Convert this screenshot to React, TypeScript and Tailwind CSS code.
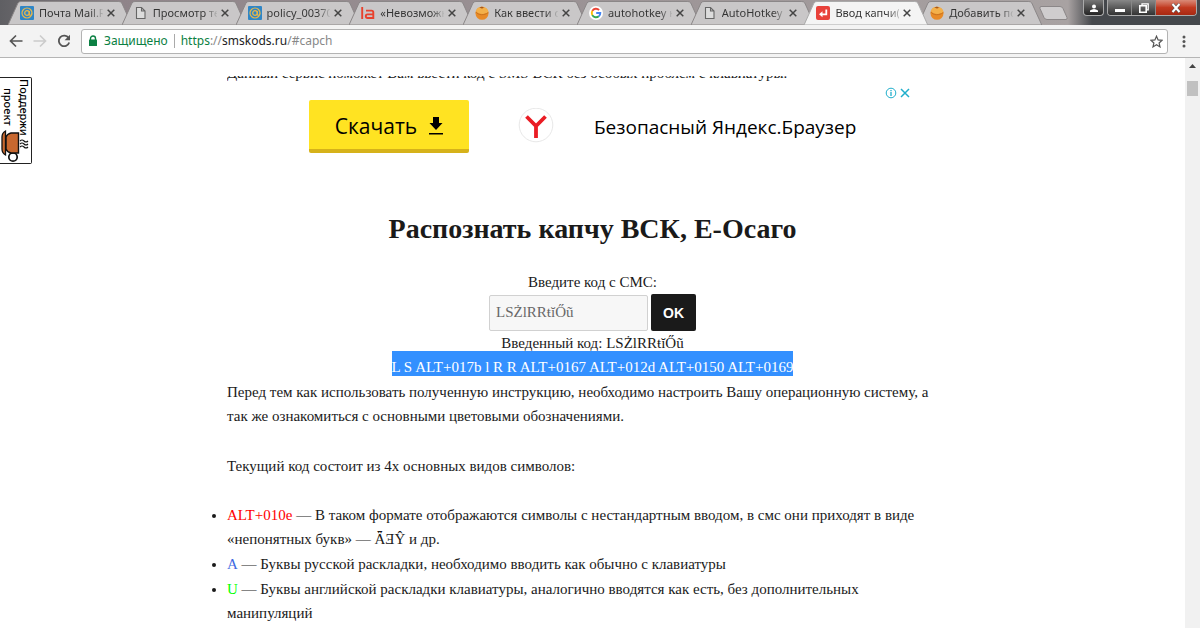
import { useState } from "react";
import type { ReactNode } from "react";
import clsx from "clsx";

type Tab = { title: string; icon: ReactNode; active?: boolean };

function MailIcon() {
  return (
    <svg viewBox="0 0 14 14" className="h-3.5 w-3.5">
      <rect width="14" height="14" rx="1" fill="#2f86c6" />
      <circle cx="7" cy="7" r="5" fill="none" stroke="#e8b64a" strokeWidth="1.2" />
      <circle cx="7" cy="7" r="2.3" fill="none" stroke="#e8b64a" strokeWidth="1.3" />
      <path d="M9.3 5v3.2c0 1.5 2.4 1.4 2.7-.8" fill="none" stroke="#e8b64a" strokeWidth="1.1" />
    </svg>
  );
}

function PageIcon() {
  return (
    <svg viewBox="0 0 14 14" className="h-3.5 w-3.5">
      <path d="M2.5 1.5h5L11 5v7.500H2.500zM7.500 1.500V5H11" fill="#dcdcdc" stroke="#666" strokeWidth="1.1" />
    </svg>
  );
}

function LaIcon() {
  return (
    <svg viewBox="0 0 14 14" className="h-3.5 w-3.5">
      <path
        d="M1.2 1v12M5 4.6h5.5q1.800 0 1.800 1.800V12H6.500q-1.700 0-1.700-1.700 0-1.900 1.700-1.900h5.800"
        fill="none"
        stroke="#e8412c"
        strokeWidth="1.9"
      />
    </svg>
  );
}

function BallIcon() {
  return (
    <svg viewBox="0 0 14 14" className="h-3.5 w-3.5">
      <circle cx="7" cy="7.3" r="6.5" fill="#e88a26" />
      <path d="M.8 5C2 1.500 5 .8 7 .8c3.500 0 6 2.400 6.300 5C10 9 3.500 8.500.8 5z" fill="#f3b04a" />
      <path d="M.8 6c2.500 3.500 8.500 3.500 12.500.6" fill="none" stroke="#c9731f" />
      <path d="M4.500 1.600Q6.500 0 9 1.500 7 3.300 4.500 1.600z" fill="#a8561a" />
    </svg>
  );
}

function GoogleIcon() {
  return (
    <svg viewBox="0 0 14 14" className="h-3.5 w-3.5">
      <circle cx="7" cy="7" r="7" fill="#fff" />
      <g fill="none" strokeWidth="1.9">
        <path d="M10.1 4A4.3 4.3 0 0 0 3.300 4.900" stroke="#ea4335" />
        <path d="M3.3 4.900a4.300 4.300 0 0 0 0 4.200" stroke="#fbbc05" />
        <path d="M3.3 9.100a4.300 4.300 0 0 0 6.500 1.200" stroke="#34a853" />
        <path d="M9.8 10.300A4.300 4.300 0 0 0 11.300 7H7.200" stroke="#4285f4" />
      </g>
    </svg>
  );
}

function EnterIcon() {
  return (
    <svg viewBox="0 0 14 14" className="h-3.5 w-3.5">
      <rect width="14" height="14" rx="2" fill="#e8413a" />
      <path d="M10.3 3.500v4.800H5" fill="none" stroke="#fff" strokeWidth="1.8" />
      <path d="M6.5 5.300v6L3 8.300z" fill="#fff" />
    </svg>
  );
}

const tabs: Tab[] = [
  { title: "Почта Mail.R", icon: <MailIcon /> },
  { title: "Просмотр те", icon: <PageIcon /> },
  { title: "policy_00370", icon: <MailIcon /> },
  { title: "«Невозможн", icon: <LaIcon /> },
  { title: "Как ввести с", icon: <BallIcon /> },
  { title: "autohotkey н", icon: <GoogleIcon /> },
  { title: "AutoHotkey", icon: <PageIcon /> },
  { title: "Ввод капчи(", icon: <EnterIcon />, active: true },
  { title: "Добавить по", icon: <BallIcon /> },
];

function TabItem({ tab }: { tab: Tab }) {
  return (
    <div className={clsx("relative flex h-6 min-w-0 flex-1 items-center pl-3", tab.active && "z-10")}>
      <svg viewBox="0 0 124 24" preserveAspectRatio="none" className="absolute inset-y-0 left-0 -z-10 h-6 w-[calc(100%+10px)]">
        <path
          d="M0 24L10 2Q11 .5 13 .5H111Q113 .5 114 2L124 24z"
          fill={tab.active ? "#f4f4f4" : "#c9c7c8"}
          stroke={tab.active ? "#aaa" : "#8b8788"}
        />
      </svg>
      <span className="shrink-0">{tab.icon}</span>
      <button className="ml-[5px] min-w-0 flex-1 bg-linear-to-r from-[#333] from-80% to-[#bbb] bg-clip-text text-left text-[11px] whitespace-nowrap text-transparent">
        {tab.title}
      </button>
      <button aria-label="Закрыть вкладку" className="mr-[3px] shrink-0 py-1 pl-1">
        <svg viewBox="0 0 8 8" className="mr-1 h-2 w-2">
          <path d="M.7.7l6.600 6.600M7.300.7L.7 7.300" stroke="#444" strokeWidth="1.5" />
        </svg>
      </button>
    </div>
  );
}

function WindowControls() {
  return (
    <div className="flex h-4 gap-[3px] pr-[3px]">
      <button aria-label="Профиль" className="flex w-[21px] items-center justify-center rounded-b border border-t-0 border-[#aaa] bg-linear-to-b from-[#777] to-[#252525]">
        <svg viewBox="0 0 10 10" className="h-2.5 w-2.5" fill="#fff">
          <circle cx="5" cy="3.5" r="2" />
          <path d="M1 9V7.500Q3 6 5 6t4 1.500V9z" />
        </svg>
      </button>
      <div className="flex overflow-hidden rounded-b border border-t-0 border-[#aaa]">
        <button aria-label="Свернуть" className="flex w-6 items-center justify-center border-r border-[#888] bg-linear-to-b from-[#888] to-[#333]">
          <svg viewBox="0 0 10 10" className="h-2.5 w-2.5">
            <path d="M0 6h10v3H0z" fill="#fff" />
          </svg>
        </button>
        <button aria-label="Развернуть" className="flex w-6 items-center justify-center border-r border-[#888] bg-linear-to-b from-[#888] to-[#333]">
          <svg viewBox="0 0 10 10" className="h-2.5 w-2.5" fill="none" stroke="#fff" strokeWidth="1.3">
            <path d="M3 2.500V.8h6.200v6H7.500" />
            <path d="M.8 2.800h6.400v6.400H.8z" strokeWidth="1.6" />
          </svg>
        </button>
        <button aria-label="Закрыть" className="flex w-10 items-center justify-center bg-linear-to-b from-[#d98a78] via-[#c23a20] to-[#a82912]">
          <svg viewBox="0 0 10 10" className="h-2.5 w-2.5">
            <path d="M1.5 1l7 8M8.500 1l-7 8" stroke="#555" strokeWidth="3.2" />
            <path d="M1.5 1l7 8M8.500 1l-7 8" stroke="#fff" strokeWidth="2" />
          </svg>
        </button>
      </div>
    </div>
  );
}

function Toolbar() {
  return (
    <div className="flex h-[33px] shrink-0 items-center border-b border-[#b5b5b5] bg-[#f3f3f3]">
      <button aria-label="Назад" className="ml-2 p-px">
        <svg viewBox="0 0 14 14" className="h-3.5 w-3.5" fill="none" stroke="#555" strokeWidth="1.7">
          <path d="M13.5 7H2M7 1.500L1.500 7 7 12.500" />
        </svg>
      </button>
      <button aria-label="Вперёд" className="ml-2 p-px" disabled>
        <svg viewBox="0 0 14 14" className="h-3.5 w-3.5" fill="none" stroke="#ccc" strokeWidth="1.7">
          <path d="M.5 7H12M7 1.500L12.500 7 7 12.500" />
        </svg>
      </button>
      <button aria-label="Обновить" className="ml-2 p-px">
        <svg viewBox="0 0 14 14" className="h-3.5 w-3.5">
          <path d="M11.6 4A5.300 5.300 0 1 0 12.200 8.500" fill="none" stroke="#555" strokeWidth="1.8" />
          <path d="M13 .8v5.400H7.600z" fill="#555" />
        </svg>
      </button>
      <div className="ml-[9px] flex h-[25px] flex-1 items-center rounded-[3px] border border-[#b3b3b3] bg-white pr-1 pl-1.5 text-xs">
        <svg viewBox="0 0 10 12" className="mr-1.5 h-3 w-2.5">
          <path d="M2.5 5V3.500a2.500 2.500 0 0 1 5 0V5" fill="none" stroke="#0b8043" strokeWidth="1.4" />
          <rect x="1" y="4.6" width="8" height="6.4" rx=".6" fill="#0b8043" />
        </svg>
        <span className="mr-1.5 text-[#0b8043]">Защищено</span>
        <span className="mr-1.5 h-3.5 w-px bg-[#aaa]" />
        <a href="#capch" className="flex-1 text-[#888]">
          <span className="text-[#0b8043]">https</span>://<span className="text-[#222]">smskods.ru</span>/#capch
        </a>
        <button aria-label="Добавить в закладки">
          <svg viewBox="0 0 13 13" className="h-[13px] w-[13px]">
            <path d="M6.5 1.200l1.600 3.700 4 .4-3 2.700.9 3.900-3.500-2.100L3 11.900 3.900 8 .9 5.300l4-.4z" fill="none" stroke="#555" strokeWidth="1.2" />
          </svg>
        </button>
      </div>
      <button aria-label="Меню" className="mx-[14px]">
        <svg viewBox="0 0 4 13" className="h-[13px] w-1" fill="#555">
          <circle cx="2" cy="2" r="1.5" />
          <circle cx="2" cy="6.5" r="1.5" />
          <circle cx="2" cy="11" r="1.5" />
        </svg>
      </button>
    </div>
  );
}

function SupportBadge() {
  return (
    <a
      href="#support"
      className="absolute top-[19px] left-0 h-[87px] w-8 rounded-r-xs border border-l-0 border-[#222] bg-white font-['Noto_Sans',sans-serif] text-[11px] font-medium text-black"
    >
      <span className="flex h-[58px] w-8 flex-row-reverse items-center justify-between">
        <span className="leading-4 [writing-mode:vertical-rl]">Поддержи</span>
        <span className="leading-4 [writing-mode:vertical-rl]">проект</span>
      </span>
      <svg viewBox="0 0 32 34" className="absolute bottom-0 left-0 h-[34px] w-8">
        <circle cx="13" cy="28" r="4.2" fill="#fff" stroke="#111" strokeWidth="1.7" />
        <path d="M18.500 4v20H11Q7 23 6 20V8q1-3 5-4z" fill="#c8682f" stroke="#111" strokeWidth="1.4" />
        <path d="M5.500 2v24Q2 24 2 20V8q0-4 3.500-6z" fill="#c8682f" stroke="#111" strokeWidth="1.3" />
        <path d="M20 12q2-2 4 0t4 0M20 15q2-2 4 0t4 0M20 18q2-2 4 0t4 0" fill="none" stroke="#111" strokeWidth="1.1" />
      </svg>
    </a>
  );
}

function Banner() {
  return (
    <div className="relative flex h-[90px] items-center pl-[82px] font-['Open_Sans','Noto_Sans',sans-serif] text-black">
      <button className="flex h-[53px] w-40 items-center justify-center gap-3 rounded-xs border-b-4 border-[#d6b21a] bg-[#ffe322] pt-1 text-[21px]">
        Скачать
        <svg viewBox="0 0 14 18" className="h-[18px] w-3.5">
          <path d="M4 0h6v6h3.500L7 13 .5 6H4zM0 16h14v1.500H0z" />
        </svg>
      </button>
      <svg viewBox="0 0 36 36" className="ml-[49px] h-9 w-9">
        <circle cx="18" cy="17" r="16.8" fill="#fff" stroke="#e8e8e8" />
        <path d="M8.500 8.500L18 18l9.500-9.500M18 17.500V30" fill="none" stroke="#ea1c24" strokeWidth="3.8" />
      </svg>
      <span className="ml-10 pt-0.5 text-[19px] whitespace-nowrap">Безопасный Яндекс.Браузер</span>
      <div className="absolute top-1.5 right-12 flex items-center gap-[3px]">
        <button aria-label="О рекламе">
          <svg viewBox="0 0 12 12" className="h-3 w-3" fill="none" stroke="#1faecb">
            <circle cx="6" cy="6" r="4.8" />
            <path d="M6 5v4M6 3v1.200" strokeWidth="1.3" />
          </svg>
        </button>
        <button aria-label="Закрыть рекламу">
          <svg viewBox="0 0 10 10" className="h-2.5 w-2.5">
            <path d="M1 1l8 8M9 1L1 9" stroke="#1faecb" strokeWidth="1.5" />
          </svg>
        </button>
      </div>
    </div>
  );
}

function Content() {
  const [code, setCode] = useState("LSŻlRRŧĭŐũ");

  return (
    <main className="mx-auto w-full max-w-[731px] pt-[18px] font-['Liberation_Serif',serif] text-[15px] leading-6 text-[#1a1a1a]">
      <p className="flex h-[5px] items-end overflow-hidden">
        <span className="leading-4">Данный сервис поможет Вам ввести код с SMS ВСК без особых проблем с клавиатуры.</span>
      </p>
      <Banner />
      <h1 className="mt-10 text-center text-[28px] leading-9 font-bold">Распознать капчу ВСК, Е-Осаго</h1>
      <form className="mt-[23px] text-center" onSubmit={(e) => e.preventDefault()}>
        <label htmlFor="code">Введите код с СМС:</label>
        <div className="flex items-center justify-center gap-[3px]">
          <input
            id="code"
            value={code}
            onChange={(e) => setCode(e.target.value)}
            className="h-9 w-[159px] rounded-xs border border-[#d1d1d1] bg-[#f7f7f7] px-1.5 text-[#686868]"
          />
          <button className="h-[37px] w-[45px] rounded-xs bg-[#1a1a1a] font-['Liberation_Sans',sans-serif] text-sm font-bold text-white">OK</button>
        </div>
        <p>Введенный код: {code}</p>
        <p className="-mt-1 flex justify-center">
          <mark className="bg-[#3390ff] pt-2 leading-[17px] text-white">
            L S ALT+017b l R R ALT+0167 ALT+012d ALT+0150 ALT+0169
          </mark>
        </p>
      </form>
      <p className="mt-1">
        Перед тем как использовать полученную инструкцию, необходимо настроить Вашу операционную систему, а
        <br />
        так же ознакомиться с основными цветовыми обозначениями.
      </p>
      <p className="mt-[26px]">Текущий код состоит из 4х основных видов символов:</p>
      <ul className="mt-[25px] list-disc space-y-px">
        <li>
          <span className="text-[#f00]">ALT+010e</span> — В таком формате отображаются символы с нестандартным вводом, в смс
          они приходят в виде
          <br />
          «непонятных букв» — ǞƎŶ и др.
        </li>
        <li>
          <span className="text-[#4169e1]">А</span> — Буквы русской раскладки, необходимо вводить как обычно с клавиатуры
        </li>
        <li>
          <span className="text-[#0f0]">U</span> — Буквы английской раскладки клавиатуры, аналогично вводятся как есть, без
          дополнительных
          <br />
          манипуляций
        </li>
      </ul>
    </main>
  );
}

export default function App() {
  return (
    <div className="flex h-screen flex-col overflow-hidden bg-white font-['Noto_Sans',sans-serif]">
      <header className="isolate flex h-[25px] shrink-0 items-start justify-between bg-[linear-gradient(to_right,#5f5f63,#8f8489_10%,#a8a2a2_89%,#45484c_91%)]">
        <div className="flex min-w-0 flex-1 pt-px pl-2">
          <nav className="flex w-[1024px] min-w-0">
            {tabs.map((tab) => (
              <TabItem key={tab.title} tab={tab} />
            ))}
          </nav>
          <button aria-label="Новая вкладка" className="ml-1.5 self-center">
            <svg viewBox="0 0 30 14" className="h-3.5 w-[30px]">
              <path d="M3 .5h19q2 0 3 2l4 9q.5 2-1 2H9q-2 0-3-2L2 2.500Q1.500.5 3 .5z" fill="#cfcdce" stroke="#8b8788" />
            </svg>
          </button>
        </div>
        <WindowControls />
      </header>
      <Toolbar />
      <div className="relative flex min-h-0 flex-1">
        <div className="min-w-0 flex-1 overflow-hidden">
          <Content />
        </div>
        <div className="flex w-[15px] flex-col items-center bg-[#f1f1f1]">
          <svg viewBox="0 0 7 4" className="mt-1.5 h-1 w-[7px]">
            <path d="M3.5 0L7 4H0z" fill="#444" />
          </svg>
          <div className="mt-[13px] h-[15px] w-[11px] bg-[#c1c1c1]" />
        </div>
        <SupportBadge />
      </div>
    </div>
  );
}
